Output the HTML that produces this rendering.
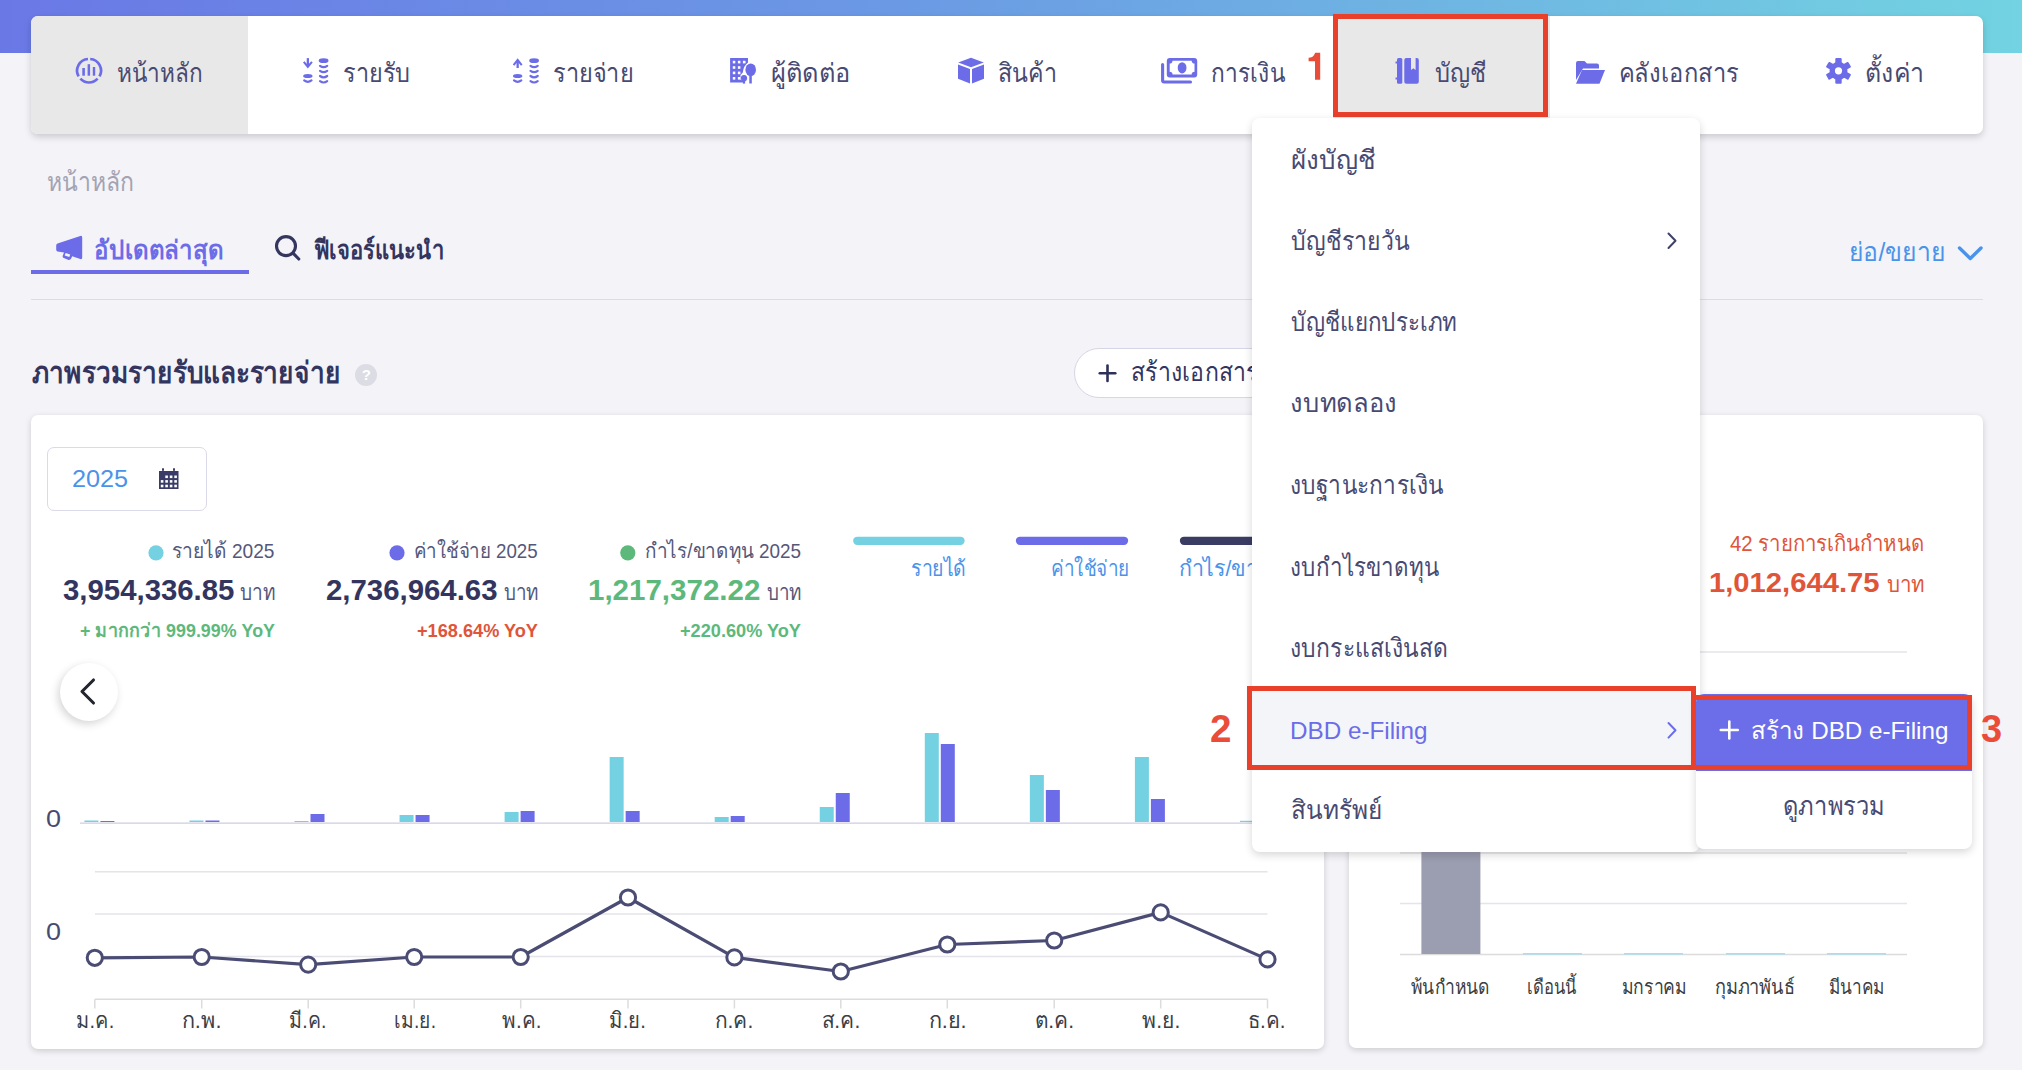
<!DOCTYPE html><html><head><meta charset="utf-8"><style>
*{box-sizing:border-box;margin:0;padding:0}
html,body{width:2022px;height:1070px;overflow:hidden}
body{background:#f3f3f8;font-family:"Liberation Sans",sans-serif;color:#3f4169;position:relative}
.a{position:absolute}
.t{position:absolute;white-space:nowrap;line-height:1;transform-origin:0 0}
svg.full{position:absolute;left:0;top:0;width:2022px;height:1070px;overflow:visible}
</style></head><body>
<div class="a" style="left:0;top:0;width:2022px;height:53px;background:linear-gradient(90deg,#6a78e6 0%,#6b9ae4 45%,#72d3e1 100%)"></div>
<div class="a" style="left:31px;top:16px;width:1952px;height:118px;background:#fff;border-radius:7px;box-shadow:0 3px 7px rgba(0,0,0,.17);overflow:hidden"><div class="a" style="left:0;top:0;width:217px;height:118px;background:#e8e8e9"></div><div class="a" style="left:1302px;top:0;width:217px;height:118px;background:#e8e8e9"></div></div>
<div class="a" style="left:1333px;top:14px;width:215px;height:103px;border:5px solid #e8402a"></div>
<div class="a" style="left:31px;top:298.5px;width:1952px;height:1.5px;background:#dcdce6"></div>
<div class="a" style="left:31px;top:270px;width:218px;height:3.5px;background:#6c6ce9"></div>
<div class="a" style="left:1074px;top:348px;width:260px;height:50px;border:1.2px solid #d6d6e6;border-radius:25px;background:#fff"></div>
<div class="a" style="left:355.3px;top:364px;width:22px;height:22px;border-radius:50%;background:#dcdce4;color:#fff;font-size:15px;font-weight:700;line-height:22px;text-align:center">?</div>
<div class="a" style="left:31px;top:415px;width:1293px;height:634px;background:#fff;border-radius:7px;box-shadow:0 2px 6px rgba(0,0,0,.16)"></div>
<div class="a" style="left:1349px;top:415px;width:634px;height:633px;background:#fff;border-radius:7px;box-shadow:0 2px 6px rgba(0,0,0,.16)"></div>
<div class="a" style="left:47px;top:447px;width:160px;height:64px;border:1.5px solid #dadae8;border-radius:7px"></div>
<div class="a" style="left:59.5px;top:663px;width:58px;height:58px;border-radius:50%;background:#fff;box-shadow:-2px 3px 9px rgba(0,0,0,.17)"></div>
<svg class="full" viewBox="0 0 2022 1070"><g fill="none" stroke="#6c6ce9" stroke-width="2.7"><path d="M78.6 76.3 A11.6 11.6 0 0 1 88 59"/><path d="M90.2 59 A11.6 11.6 0 0 1 99.5 76.3"/><path d="M97.6 78.7 A11.6 11.6 0 0 1 80.4 78.7"/></g><g fill="#6c6ce9"><rect x="82.3" y="68" width="2.6" height="7.7"/><rect x="87.6" y="64.2" width="2.5" height="11.5"/><rect x="92.8" y="67" width="2.4" height="8.7"/></g><g fill="#6c6ce9"><rect x="306.7" y="58.1" width="2.3" height="7"/><path d="M303 62.5 L307.85 68.5 L312.7 62.5 L311.2 61.2 L307.85 65 L304.5 61.2Z"/><ellipse cx="307.85" cy="76" rx="4.7" ry="2.1"/></g><g fill="none" stroke="#6c6ce9" stroke-width="2.2" stroke-linecap="round"><path d="M304.2 80.4 Q307.85 83.2 311.5 80.4"/><ellipse cx="323.6" cy="60.7" rx="3.8" ry="1.3" fill="#6c6ce9"/><path d="M320 65.8 Q323.6 68.39999999999999 327.2 65.8"/><path d="M320 70.9 Q323.6 73.5 327.2 70.9"/><path d="M320 76 Q323.6 78.6 327.2 76"/><path d="M320 81.2 Q323.6 83.8 327.2 81.2"/></g><g fill="#6c6ce9"><rect x="516.5" y="61" width="2.3" height="7"/><path d="M512.8 64.5 L517.65 58.2 L522.5 64.5 L521.0 65.8 L517.65 61.8 L514.3 65.8Z"/><ellipse cx="517.65" cy="76" rx="4.7" ry="2.1"/></g><g fill="none" stroke="#6c6ce9" stroke-width="2.2" stroke-linecap="round"><path d="M514.0 80.4 Q517.65 83.2 521.3 80.4"/><ellipse cx="534.1" cy="60.7" rx="3.8" ry="1.3" fill="#6c6ce9"/><path d="M530.5 65.8 Q534.1 68.39999999999999 537.7 65.8"/><path d="M530.5 70.9 Q534.1 73.5 537.7 70.9"/><path d="M530.5 76 Q534.1 78.6 537.7 76"/><path d="M530.5 81.2 Q534.1 83.8 537.7 81.2"/></g><g fill="#6c6ce9"><path d="M730.1 58.1 H748 V62.6 Q743.5 66 742.8 72.5 L740.5 75 V80 L743 80.3 V82.6 H730.1Z"/><ellipse cx="750.7" cy="69.7" rx="5.3" ry="6.3"/><rect x="749.3" y="73" width="2.5" height="10.5"/><circle cx="744" cy="78.2" r="3.1"/><rect x="742.9" y="79" width="2.2" height="4.6"/></g><g fill="#fff"><rect x="732.8" y="60.8" width="2.5" height="2.6"/><rect x="732.8" y="66.2" width="2.5" height="2.6"/><rect x="732.8" y="71.6" width="2.5" height="2.6"/><rect x="732.8" y="77" width="2.5" height="2.6"/><rect x="737.9" y="60.8" width="2.5" height="2.6"/><rect x="737.9" y="66.2" width="2.5" height="2.6"/><rect x="737.9" y="71.6" width="2.5" height="2.6"/><rect x="737.9" y="77" width="2.5" height="2.6"/><rect x="742.9" y="60.8" width="2.6" height="2.6"/></g><g fill="#6c6ce9"><path d="M971 57.7 L983.8 62.4 L971 67.2 L958.2 62.4Z"/><path d="M958 64.4 L970 69 V83.5 L958 78.8Z"/><path d="M984 64.4 L972 69 V83.5 L984 78.8Z"/></g><g><rect x="1166.8" y="57.9" width="30.4" height="19.7" rx="3" fill="#6c6ce9"/><path d="M1172.5 60.7 H1191.7 A2.8 2.8 0 0 0 1194.5 63.5 V71.7 A2.8 2.8 0 0 0 1191.7 74.5 H1172.5 A2.8 2.8 0 0 0 1169.7 71.7 V63.5 A2.8 2.8 0 0 0 1172.5 60.7Z" fill="#fff"/><ellipse cx="1182.1" cy="67.8" rx="4.4" ry="5.6" fill="#6c6ce9"/><path d="M1162.6 64.5 V80.3 Q1162.6 82 1164.3 82 H1190.5" fill="none" stroke="#6c6ce9" stroke-width="3.1" stroke-linecap="round"/></g><g fill="#6c6ce9"><rect x="1397" y="58" width="5.3" height="25.8" rx="1.5"/><rect x="1404.3" y="58" width="14.5" height="25.8" rx="2"/><rect x="1395.5" y="61.5" width="2" height="2"/><rect x="1395.5" y="77.5" width="2" height="2"/></g><path d="M1411 58 V70 L1413.3 68.2 L1415.6 70 V58Z" fill="#e8e8e9"/><g fill="#6c6ce9"><path d="M1576 63 Q1576 61 1578 61 H1584.5 L1587 63.5 H1597 Q1599 63.5 1599 65.5 V68.5 H1583 L1576 80Z"/><path d="M1582 70 H1605 L1599.5 83.8 H1576Z"/></g><g fill="#6c6ce9"><circle cx="1838.5" cy="70.8" r="9"/><rect x="1835.3" y="57.9" width="6.4" height="6" rx="1" transform="rotate(0 1838.5 70.8)"/><rect x="1835.3" y="57.9" width="6.4" height="6" rx="1" transform="rotate(60 1838.5 70.8)"/><rect x="1835.3" y="57.9" width="6.4" height="6" rx="1" transform="rotate(120 1838.5 70.8)"/><rect x="1835.3" y="57.9" width="6.4" height="6" rx="1" transform="rotate(180 1838.5 70.8)"/><rect x="1835.3" y="57.9" width="6.4" height="6" rx="1" transform="rotate(240 1838.5 70.8)"/><rect x="1835.3" y="57.9" width="6.4" height="6" rx="1" transform="rotate(300 1838.5 70.8)"/></g><circle cx="1838.5" cy="70.8" r="3.6" fill="#fff"/><path fill-rule="evenodd" fill="#6c6ce9" d="M57.5 243.5 L80.3 236 Q82.2 235.4 82.2 237.5 V257.5 Q82.2 259.6 80.3 259 L72.2 256.3 L71 258.8 Q70 260.4 68 259.7 L63.8 258 Q62.2 257.2 62.8 255.6 L64 252.6 L57.5 251.6 Q56.2 251.3 56.2 249.6 V245.5 Q56.2 243.9 57.5 243.5Z M65.6 253 L70.2 254.6 L69.3 257.1 L64.7 255.5Z"/><g fill="none" stroke="#34365e" stroke-width="3.1" stroke-linecap="round"><circle cx="286" cy="246.1" r="9.5"/><path d="M293 253.2 L298.8 259"/></g><path d="M1959.5 248 L1970.3 258.5 L1981 248" fill="none" stroke="#4a93ea" stroke-width="3.4" stroke-linecap="round" stroke-linejoin="round"/><g stroke="#2d3058" stroke-width="2.6" stroke-linecap="round"><path d="M1107.5 365.5 V381"/><path d="M1099.8 373.2 H1115.3"/></g><g><rect x="159" y="471" width="19.5" height="18" fill="#3a3b66"/><rect x="162" y="468.3" width="2" height="2.5" fill="#3a3b66"/><rect x="173" y="468.3" width="2" height="2.5" fill="#3a3b66"/><rect x="160.8" y="480.1" width="2.6" height="2.6" fill="#fff"/><rect x="160.8" y="484.7" width="2.6" height="2.6" fill="#fff"/><rect x="165.3" y="475.5" width="2.6" height="2.6" fill="#fff"/><rect x="165.3" y="480.1" width="2.6" height="2.6" fill="#fff"/><rect x="165.3" y="484.7" width="2.6" height="2.6" fill="#fff"/><rect x="169.8" y="475.5" width="2.6" height="2.6" fill="#fff"/><rect x="169.8" y="480.1" width="2.6" height="2.6" fill="#fff"/><rect x="169.8" y="484.7" width="2.6" height="2.6" fill="#fff"/><rect x="174.3" y="475.5" width="2.6" height="2.6" fill="#fff"/><rect x="174.3" y="480.1" width="2.6" height="2.6" fill="#fff"/><rect x="174.3" y="484.7" width="2.6" height="2.6" fill="#fff"/></g><circle cx="156" cy="552.8" r="7.6" fill="#74d1e1"/><circle cx="397" cy="552.8" r="7.6" fill="#6c6ce9"/><circle cx="627.8" cy="552.8" r="7.6" fill="#5db97b"/><g stroke-width="8.3" stroke-linecap="round"><path d="M857.3 540.8 H960.5" stroke="#74d1e1"/><path d="M1020 540.8 H1124" stroke="#6c6ce9"/><path d="M1184 540.8 H1290" stroke="#3a3c64"/></g><path d="M93.5 680 L82 691.5 L93.5 703" fill="none" stroke="#23262e" stroke-width="3.1" stroke-linecap="round" stroke-linejoin="round"/><path d="M80 823.2 H1252" stroke="#cfcde2" stroke-width="1.3"/><rect x="84.4" y="820.5" width="14" height="1.5" fill="#74d1e1"/><rect x="100.4" y="821" width="14" height="1" fill="#6c6ce9"/><rect x="189.45" y="820.5" width="14" height="1.5" fill="#74d1e1"/><rect x="205.45" y="820.5" width="14" height="1.5" fill="#6c6ce9"/><rect x="294.5" y="821" width="14" height="1" fill="#74d1e1"/><rect x="310.5" y="814" width="14" height="8" fill="#6c6ce9"/><rect x="399.54999999999995" y="815" width="14" height="7" fill="#74d1e1"/><rect x="415.54999999999995" y="815" width="14" height="7" fill="#6c6ce9"/><rect x="504.6" y="812" width="14" height="10" fill="#74d1e1"/><rect x="520.6" y="811" width="14" height="11" fill="#6c6ce9"/><rect x="609.65" y="757" width="14" height="65" fill="#74d1e1"/><rect x="625.65" y="811" width="14" height="11" fill="#6c6ce9"/><rect x="714.6999999999999" y="817" width="14" height="5" fill="#74d1e1"/><rect x="730.6999999999999" y="816" width="14" height="6" fill="#6c6ce9"/><rect x="819.75" y="807" width="14" height="15" fill="#74d1e1"/><rect x="835.75" y="793" width="14" height="29" fill="#6c6ce9"/><rect x="924.8" y="733" width="14" height="89" fill="#74d1e1"/><rect x="940.8" y="744" width="14" height="78" fill="#6c6ce9"/><rect x="1029.85" y="775" width="14" height="47" fill="#74d1e1"/><rect x="1045.85" y="790" width="14" height="32" fill="#6c6ce9"/><rect x="1134.9" y="757" width="14" height="65" fill="#74d1e1"/><rect x="1150.9" y="799" width="14" height="23" fill="#6c6ce9"/><rect x="1239.95" y="820.8" width="14" height="1.2" fill="#74d1e1"/><g stroke="#e4e4ea" stroke-width="1.5"><path d="M95 871.8 H1267.5"/><path d="M95 914 H1267.5"/><path d="M95 956.6 H1267.5"/></g><path d="M95 999.3 H1267.5" stroke="#dcdcdf" stroke-width="1.6"/><g stroke="#dcdcdf" stroke-width="1.5"><path d="M94.8 999.3 V1008.5"/><path d="M201.7 999.3 V1008.5"/><path d="M308.2 999.3 V1008.5"/><path d="M414.2 999.3 V1008.5"/><path d="M520.7 999.3 V1008.5"/><path d="M628 999.3 V1008.5"/><path d="M734.4 999.3 V1008.5"/><path d="M840.8 999.3 V1008.5"/><path d="M947.3 999.3 V1008.5"/><path d="M1054.2 999.3 V1008.5"/><path d="M1160.7 999.3 V1008.5"/><path d="M1267.5 999.3 V1008.5"/></g><polyline points="94.8,957.8 201.7,957 308.2,964.6 414.2,957 520.7,957 628,897.5 734.4,957.4 840.8,971.5 947.3,944.5 1054.2,940.5 1160.7,912.4 1267.5,959.4" fill="none" stroke="#4b4c74" stroke-width="3.2" stroke-linejoin="round"/><g fill="#fff" stroke="#4b4c74" stroke-width="3"><circle cx="94.8" cy="957.8" r="7.6"/><circle cx="201.7" cy="957" r="7.6"/><circle cx="308.2" cy="964.6" r="7.6"/><circle cx="414.2" cy="957" r="7.6"/><circle cx="520.7" cy="957" r="7.6"/><circle cx="628" cy="897.5" r="7.6"/><circle cx="734.4" cy="957.4" r="7.6"/><circle cx="840.8" cy="971.5" r="7.6"/><circle cx="947.3" cy="944.5" r="7.6"/><circle cx="1054.2" cy="940.5" r="7.6"/><circle cx="1160.7" cy="912.4" r="7.6"/><circle cx="1267.5" cy="959.4" r="7.6"/></g><g stroke="#e4e4ea" stroke-width="1.5"><path d="M1400 652 H1907"/><path d="M1400 702.5 H1907"/><path d="M1400 753 H1907"/><path d="M1400 803.5 H1907"/><path d="M1400 853 H1907"/><path d="M1400 903.6 H1907"/></g><path d="M1400 954.5 H1907" stroke="#dcdcdc" stroke-width="1.6"/><rect x="1421.4" y="700" width="59" height="254" fill="#9b9db0"/><g fill="#a6dff0"><rect x="1523" y="953" width="59" height="1.6"/><rect x="1624" y="953" width="59" height="1.6"/><rect x="1726" y="953" width="59" height="1.6"/><rect x="1827" y="953" width="59" height="1.6"/></g><path d="M1315.2 52.8 H1320.2 V79.8 H1315 V61.3 H1308.6 V57.7 Q1312.8 57.6 1314.2 54.8Z" fill="#e94d3a"/></svg>
<span class="t" style="--bw:86.11;left:116.63px;top:60.00px;font-size:26px;font-weight:400;color:#484a72;transform:scaleX(0.8698);">หน้าหลัก</span>
<span class="t" style="--bw:67.71;left:342.50px;top:60.00px;font-size:26px;font-weight:400;color:#484a72;transform:scaleX(0.9028);">รายรับ</span>
<span class="t" style="--bw:80.62;left:552.89px;top:60.00px;font-size:26px;font-weight:400;color:#484a72;transform:scaleX(0.9058);">รายจ่าย</span>
<span class="t" style="--bw:80.13;left:770.62px;top:60.00px;font-size:26px;font-weight:400;color:#484a72;transform:scaleX(0.9772);">ผู้ติดต่อ</span>
<span class="t" style="--bw:59.09;left:997.50px;top:60.00px;font-size:26px;font-weight:400;color:#484a72;transform:scaleX(0.8952);">สินค้า</span>
<span class="t" style="--bw:74.27;left:1211.43px;top:60.00px;font-size:26px;font-weight:400;color:#484a72;transform:scaleX(0.8738);">การเงิน</span>
<span class="t" style="--bw:51.82;left:1434.79px;top:60.00px;font-size:26px;font-weight:400;color:#484a72;transform:scaleX(0.9091);">บัญชี</span>
<span class="t" style="--bw:120.23;left:1618.88px;top:60.00px;font-size:26px;font-weight:400;color:#484a72;transform:scaleX(0.9109);">คลังเอกสาร</span>
<span class="t" style="--bw:59.33;left:1865.09px;top:60.00px;font-size:26px;font-weight:400;color:#484a72;transform:scaleX(0.9569);">ตั้งค่า</span>
<span class="t" style="--bw:87.45;left:46.52px;top:169.40px;font-size:26px;font-weight:400;color:#a3a3b3;transform:scaleX(0.8833);">หน้าหลัก</span>
<span class="t" style="--bw:129.45;left:94.08px;top:237.00px;font-size:26px;font-weight:700;color:#6c6ce9;transform:scaleX(0.9246);">อัปเดตล่าสุด</span>
<span class="t" style="--bw:130.19;left:313.50px;top:237.00px;font-size:26px;font-weight:700;color:#33355e;transform:scaleX(0.8454);">ฟีเจอร์แนะนำ</span>
<span class="t" style="--bw:96.33;left:1848.80px;top:239.00px;font-size:26px;font-weight:400;color:#4a93ea;transform:scaleX(0.9515);">ย่อ/ขยาย</span>
<span class="t" style="--bw:308.35;left:31.80px;top:358.00px;font-size:30px;font-weight:700;color:#33355e;transform:scaleX(0.8735);">ภาพรวมรายรับและรายจ่าย</span>
<span class="t" style="--bw:127.57;left:1131.31px;top:359.00px;font-size:26px;font-weight:400;color:#33355e;transform:scaleX(0.8859);">สร้างเอกสาร</span>
<span class="t" style="--bw:56.16;left:71.95px;top:467.00px;font-size:24px;font-weight:400;color:#4a93ea;transform:scaleX(1.0519);">2025</span>
<span class="t" style="--bw:102.42;left:172.19px;top:539.90px;font-size:21px;font-weight:400;color:#55577a;transform:scaleX(0.9099);">รายได้ 2025</span>
<span class="t" style="--bw:123.69;left:414.21px;top:539.90px;font-size:21px;font-weight:400;color:#55577a;transform:scaleX(0.8927);">ค่าใช้จ่าย 2025</span>
<span class="t" style="--bw:156.05;left:645.10px;top:539.90px;font-size:21px;font-weight:400;color:#55577a;transform:scaleX(0.9000);">กำไร/ขาดทุน 2025</span>
<span class="t" style="--bw:171.44;left:62.59px;top:575.90px;font-size:29px;font-weight:700;color:#33355e;transform:scaleX(1.0125);">3,954,336.85</span>
<span class="t" style="--bw:171.55;left:326.19px;top:575.90px;font-size:29px;font-weight:700;color:#33355e;transform:scaleX(1.0131);">2,736,964.63</span>
<span class="t" style="--bw:172.37;left:587.96px;top:575.90px;font-size:29px;font-weight:700;color:#5db97b;transform:scaleX(1.0180);">1,217,372.22</span>
<span class="t" style="--bw:35.50;left:240.33px;top:581.60px;font-size:22px;font-weight:400;color:#55577a;transform:scaleX(0.8658);">บาท</span>
<span class="t" style="--bw:35.07;left:504.04px;top:581.60px;font-size:22px;font-weight:400;color:#55577a;transform:scaleX(0.8553);">บาท</span>
<span class="t" style="--bw:35.07;left:767.44px;top:581.60px;font-size:22px;font-weight:400;color:#55577a;transform:scaleX(0.8553);">บาท</span>
<span class="t" style="--bw:194.96;left:80.40px;top:620.70px;font-size:19px;font-weight:700;color:#5db97b;transform:scaleX(0.9396);">+ มากกว่า 999.99% YoY</span>
<span class="t" style="--bw:120.97;left:417.00px;top:620.70px;font-size:19px;font-weight:700;color:#e0553a;transform:scaleX(0.9556);">+168.64% YoY</span>
<span class="t" style="--bw:120.97;left:680.40px;top:620.70px;font-size:19px;font-weight:700;color:#5db97b;transform:scaleX(0.9556);">+220.60% YoY</span>
<span class="t" style="--bw:54.87;left:910.62px;top:558.00px;font-size:22px;font-weight:400;color:#4a93ea;transform:scaleX(0.8850);">รายได้</span>
<span class="t" style="--bw:78.07;left:1050.94px;top:558.00px;font-size:22px;font-weight:400;color:#4a93ea;transform:scaleX(0.8580);">ค่าใช้จ่าย</span>
<span class="t" style="--bw:121.39;left:1178.73px;top:558.00px;font-size:22px;font-weight:400;color:#4a93ea;transform:scaleX(0.9702);">กำไร/ขาดทุน</span>
<span class="t" style="--bw:15.01;left:46.23px;top:808.00px;font-size:23px;font-weight:400;color:#484a72;transform:scaleX(1.1727);">0</span>
<span class="t" style="--bw:15.01;left:46.23px;top:921.00px;font-size:23px;font-weight:400;color:#484a72;transform:scaleX(1.1727);">0</span>
<span class="t" style="--bw:38.22;left:76.19px;top:1009.90px;font-size:22px;font-weight:400;color:#3b3e46;transform:scaleX(0.9050);">ม.ค.</span>
<span class="t" style="--bw:39.60;left:181.82px;top:1009.90px;font-size:22px;font-weight:400;color:#3b3e46;transform:scaleX(0.9842);">ก.พ.</span>
<span class="t" style="--bw:37.38;left:289.12px;top:1009.90px;font-size:22px;font-weight:400;color:#3b3e46;transform:scaleX(0.8850);">มี.ค.</span>
<span class="t" style="--bw:42.05;left:394.13px;top:1009.90px;font-size:22px;font-weight:400;color:#3b3e46;transform:scaleX(0.8717);">เม.ย.</span>
<span class="t" style="--bw:39.35;left:502.20px;top:1009.90px;font-size:22px;font-weight:400;color:#3b3e46;transform:scaleX(0.9317);">พ.ค.</span>
<span class="t" style="--bw:36.95;left:608.98px;top:1009.90px;font-size:22px;font-weight:400;color:#3b3e46;transform:scaleX(0.9184);">มิ.ย.</span>
<span class="t" style="--bw:38.33;left:715.35px;top:1009.90px;font-size:22px;font-weight:400;color:#3b3e46;transform:scaleX(0.9526);">ก.ค.</span>
<span class="t" style="--bw:38.22;left:821.85px;top:1009.90px;font-size:22px;font-weight:400;color:#3b3e46;transform:scaleX(0.9500);">ส.ค.</span>
<span class="t" style="--bw:37.60;left:929.02px;top:1009.90px;font-size:22px;font-weight:400;color:#3b3e46;transform:scaleX(0.9833);">ก.ย.</span>
<span class="t" style="--bw:39.12;left:1034.75px;top:1009.90px;font-size:22px;font-weight:400;color:#3b3e46;transform:scaleX(0.9487);">ต.ค.</span>
<span class="t" style="--bw:38.48;left:1142.20px;top:1009.90px;font-size:22px;font-weight:400;color:#3b3e46;transform:scaleX(0.9564);">พ.ย.</span>
<span class="t" style="--bw:37.48;left:1248.47px;top:1009.90px;font-size:22px;font-weight:400;color:#3b3e46;transform:scaleX(0.9316);">ธ.ค.</span>
<span class="t" style="--bw:193.95;left:1729.60px;top:533.00px;font-size:22px;font-weight:400;color:#e0553a;transform:scaleX(0.9254);">42 รายการเกินกำหนด</span>
<span class="t" style="--bw:170.56;left:1708.96px;top:569.00px;font-size:28px;font-weight:700;color:#e0553a;transform:scaleX(1.0432);">1,012,644.75</span>
<span class="t" style="--bw:38.19;left:1886.87px;top:574.00px;font-size:22px;font-weight:400;color:#e0553a;transform:scaleX(0.9316);">บาท</span>
<span class="t" style="--bw:78.88;left:1411.00px;top:976.60px;font-size:20px;font-weight:400;color:#3a3d42;transform:scaleX(0.8764);">พ้นกำหนด</span>
<span class="t" style="--bw:49.83;left:1527.17px;top:976.60px;font-size:20px;font-weight:400;color:#3a3d42;transform:scaleX(0.8305);">เดือนนี้</span>
<span class="t" style="--bw:64.26;left:1621.62px;top:976.60px;font-size:20px;font-weight:400;color:#3a3d42;transform:scaleX(0.8803);">มกราคม</span>
<span class="t" style="--bw:79.81;left:1715.09px;top:976.60px;font-size:20px;font-weight:400;color:#3a3d42;transform:scaleX(0.9070);">กุมภาพันธ์</span>
<span class="t" style="--bw:55.12;left:1828.74px;top:976.60px;font-size:20px;font-weight:400;color:#3a3d42;transform:scaleX(0.8613);">มีนาคม</span>
<div class="a" style="left:1252px;top:117.5px;width:448px;height:734px;background:#fff;border-radius:8px;box-shadow:0 3px 8px rgba(0,0,0,.16)"></div>
<div class="a" style="left:1252px;top:691px;width:441px;height:74px;background:#f4f5f8"></div>
<div class="a" style="left:1247px;top:686px;width:449px;height:84px;border:5px solid #e8402a"></div>
<div class="a" style="left:1696px;top:694px;width:276px;height:154.5px;background:#fff;border-radius:8px;box-shadow:0 3px 8px rgba(0,0,0,.16)"></div>
<div class="a" style="left:1696px;top:694px;width:276px;height:77px;background:#6c6ee9;border-radius:8px 8px 0 0"></div>
<div class="a" style="left:1691px;top:695px;width:281px;height:75px;border:5px solid #e8402a"></div>
<svg class="full" viewBox="0 0 2022 1070"><g fill="none" stroke="#3f4169" stroke-width="2" stroke-linecap="round" stroke-linejoin="round"><path d="M1668.5 233.5 L1675.5 240.8 L1668.5 248"/></g><g fill="none" stroke="#6c6ce9" stroke-width="2" stroke-linecap="round" stroke-linejoin="round"><path d="M1668.5 723 L1675.5 730.3 L1668.5 737.6"/></g><g stroke="#fff" stroke-width="2.6" stroke-linecap="round"><path d="M1729.3 721.5 V738.5"/><path d="M1720.8 730 H1737.8"/></g></svg>
<span class="t" style="--bw:85.10;left:1291.20px;top:146.80px;font-size:26px;font-weight:400;color:#484a72;transform:scaleX(1.0012);">ผังบัญชี</span>
<span class="t" style="--bw:118.79;left:1291.31px;top:227.50px;font-size:26px;font-weight:400;color:#484a72;transform:scaleX(0.8865);">บัญชีรายวัน</span>
<span class="t" style="--bw:166.12;left:1291.34px;top:309.00px;font-size:26px;font-weight:400;color:#484a72;transform:scaleX(0.8607);">บัญชีแยกประเภท</span>
<span class="t" style="--bw:107.24;left:1290.23px;top:390.00px;font-size:26px;font-weight:400;color:#484a72;transform:scaleX(0.9838);">งบทดลอง</span>
<span class="t" style="--bw:153.75;left:1290.45px;top:472.00px;font-size:26px;font-weight:400;color:#484a72;transform:scaleX(0.8736);">งบฐานะการเงิน</span>
<span class="t" style="--bw:149.02;left:1290.48px;top:553.60px;font-size:26px;font-weight:400;color:#484a72;transform:scaleX(0.8614);">งบกำไรขาดทุน</span>
<span class="t" style="--bw:158.22;left:1290.44px;top:635.00px;font-size:26px;font-weight:400;color:#484a72;transform:scaleX(0.8790);">งบกระแสเงินสด</span>
<span class="t" style="--bw:90.98;left:1291.26px;top:797.00px;font-size:26px;font-weight:400;color:#484a72;transform:scaleX(0.9379);">สินทรัพย์</span>
<span class="t" style="--bw:137.36;left:1290.18px;top:718.60px;font-size:24px;font-weight:400;color:#6c6ce9;transform:scaleX(1.0098);">DBD e-Filing</span>
<span class="t" style="--bw:197.43;left:1750.99px;top:718.50px;font-size:24px;font-weight:400;color:#ffffff;transform:scaleX(1.0088);">สร้าง DBD e-Filing</span>
<span class="t" style="--bw:101.93;left:1782.89px;top:793.00px;font-size:26px;font-weight:400;color:#484a72;transform:scaleX(0.9101);">ดูภาพรวม</span>
<span class="t" style="--bw:21.47;left:1209.98px;top:709.80px;font-size:38px;font-weight:700;color:#e94d3a;transform:scaleX(1.0158);">2</span>
<span class="t" style="--bw:21.14;left:1981.00px;top:709.80px;font-size:38px;font-weight:700;color:#e94d3a;transform:scaleX(1.0000);">3</span>
<script>(function(){var a=document.querySelectorAll(".t");for(var i=0;i<a.length;i++){var e=a[i];var bw=parseFloat(e.style.getPropertyValue("--bw"));if(!bw)continue;e.style.transform="none";var w=e.getBoundingClientRect().width;if(w>0)e.style.transform="scaleX("+(bw/w)+")";}})();</script>
</body></html>
